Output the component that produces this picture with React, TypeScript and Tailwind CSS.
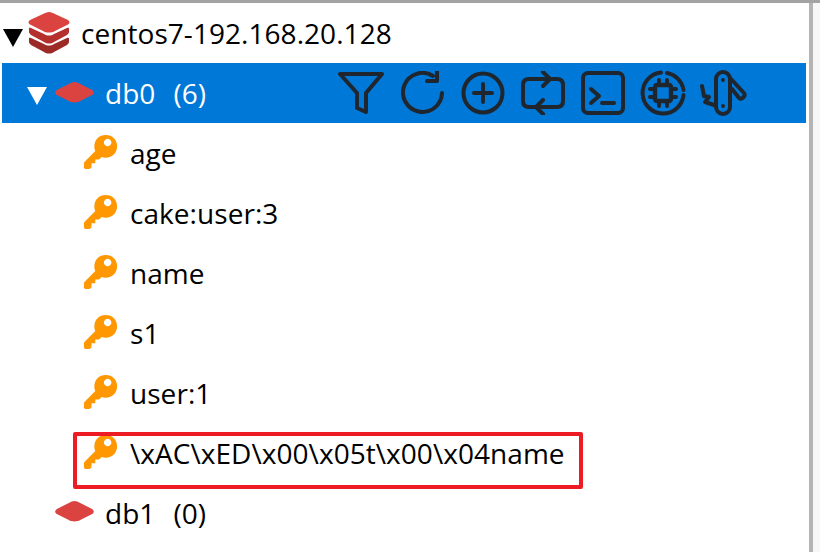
import React from "react"

const font = { fontFamily: '"Open Sans", "Noto Sans", sans-serif' }

const Stack = () => (
  <svg width="42" height="42" viewBox="0 0 42 42" className="shrink-0">
    <path d="M21 0 C23 0 25 1 27 2 L40 8 C42 9.5 42 11 40 12.5 L27 19 C24 21 18 21 15 19 L2 12.5 C0 11 0 9.5 2 8 L15 2 C17 1 19 0 21 0 Z" fill="#db4340" />
    <path d="M1 16 C1 15.5 2 15.5 3 16 L16 22 C19 24 23 24 26 22 L39 16 C40 15.5 41 15.5 41 16.5 L41 20 C41 21 40 22 39 23 L26 30 C23 32 19 32 16 30 L3 23 C2 22 1 21 1 20 Z" fill="#b5302d" />
    <path d="M1 26 C1 25.5 2 25.5 3 26 L16 32 C19 34 23 34 26 32 L39 26 C40 25.5 41 25.5 41 26.5 L41 30 C41 31 40 32 39 33 L26 40 C23 42 19 42 16 40 L3 33 C2 32 1 31 1 30 Z" fill="#9c2a27" />
  </svg>
)

const Disk = () => (
  <svg width="41" height="21" viewBox="0 0 42 22" className="shrink-0">
    <path d="M21 0 C23 0 25 1 27 2 L39 8 C42 10 42 12 39 14 L27 20 C24 22 18 22 15 20 L3 14 C0 12 0 10 3 8 L15 2 C17 1 19 0 21 0 Z" fill="#db4340" />
  </svg>
)

const Key = () => (
  <svg width="36" height="36" viewBox="0 0 36 38" className="shrink-0">
    <path
      fillRule="evenodd"
      d="M23 1 C30 1 35 6 35 13 C35 20 30 25 23 25 C21 25 20 25 19 24 L16 27 L12 27 L12 31 L8 31 L8 35 L6 37 L2 37 C1 37 0 36 0 35 L0 31 C0 30 1 29 1 29 L12 18 C11 16 11 15 11 13 C11 6 16 1 23 1 Z M25 5 C23 5 21 7 21 9 C21 11 23 13 25 13 C27 13 29 11 29 9 C29 7 27 5 25 5 Z"
      fill="#ff9800"
    />
  </svg>
)

const Toolbar = () => (
  <div className="flex items-center gap-[16px] ml-auto mr-[59px]">
    {/* filter */}
    <svg className="mr-[1px]" width="46" height="46" viewBox="0 0 46 46" fill="none" stroke="#20262e" strokeWidth="4" strokeLinecap="round" strokeLinejoin="round">
      <path d="M2 4 H44 L28 23 V42 L19 38 V23 Z" />
    </svg>
    {/* reload */}
    <svg width="44" height="44" viewBox="0 0 44 44" fill="none" stroke="#20262e" strokeWidth="4" strokeLinecap="round" strokeLinejoin="round">
      <path d="M41 22 A 19.5 19.5 0 1 1 32 5" />
      <path d="M36 0 V10 H26" />
    </svg>
    {/* plus */}
    <svg width="44" height="44" viewBox="0 0 44 44" fill="none" stroke="#20262e" strokeWidth="4" strokeLinecap="round" strokeLinejoin="round">
      <circle cx="22" cy="22" r="19.5" />
      <path d="M22 13 V31 M13 22 H31" />
    </svg>
    {/* swap */}
    <svg width="44" height="44" viewBox="0 0 44 44" fill="none" stroke="#20262e" strokeWidth="4" strokeLinecap="round" strokeLinejoin="round">
      <path d="M14 36 H8 C4 36 2 34 2 30 V14 C2 10 4 8 8 8 H28" />
      <path d="M22 1 L29 8 L22 15" />
      <path d="M30 8 H36 C40 8 42 10 42 14 V30 C42 34 40 36 36 36 H16" />
      <path d="M22 29 L15 36 L22 43" />
    </svg>
    {/* terminal */}
    <svg width="44" height="44" viewBox="0 0 44 44" fill="none" stroke="#20262e" strokeWidth="4" strokeLinecap="round" strokeLinejoin="round">
      <rect x="2" y="2" width="40" height="40" rx="5" />
      <path d="M10 18 L18 25 L10 32" />
      <path d="M21 32 H33" />
    </svg>
    {/* memory */}
    <svg className="-ml-[1px]" width="46" height="46" viewBox="0 0 46 46" fill="none" stroke="#20262e" strokeWidth="4" strokeLinecap="round" strokeLinejoin="round">
      <path d="M27 3 A 20.5 20.5 0 0 1 43.5 20" />
      <path d="M43.5 25 A 20.5 20.5 0 1 1 21 2.6" />
      <rect x="15" y="15" width="16" height="16" rx="2" strokeWidth="4.4" />
      <path d="M19 10 V14 M27 10 V14 M19 32 V36 M27 32 V36 M10 19 H14 M10 27 H14 M32 19 H36 M32 27 H36" />
    </svg>
    {/* swiss knife */}
    <svg className="-ml-[3px]" width="48" height="48" viewBox="0 0 48 48" fill="none" stroke="#20262e" strokeWidth="4" strokeLinecap="round" strokeLinejoin="round">
      <rect x="17" y="3" width="14" height="42" rx="7" />
      <circle cx="24" cy="11" r="2" fill="#20262e" stroke="none" />
      <circle cx="24" cy="37" r="2" fill="#20262e" stroke="none" />
      <path d="M32 10 L45 24 C47 27 43 31 40 29 L33 20" />
      <path d="M3 17 L5 27 L10 28 L6 33 L15 36" />
    </svg>
  </div>
)

const keys = ["age", "cake:user:3", "name", "s1", "user:1"]

export default function App() {
  return (
    <div className="w-[820px] h-[552px] bg-white overflow-hidden flex flex-col relative" style={font}>
      <div className="h-[3px] bg-[#a3a3a3] shrink-0" />
      <div className="flex w-[820px]">
        <div className="w-[806px] pl-[2px] text-[28px] tracking-[0.05px] text-black leading-none">
          {/* connection */}
          <div className="h-[60px] flex items-center">
            <span className="w-0 h-0 ml-[1px] mt-[9px] border-l-[10px] border-r-[10px] border-t-[18px] border-l-transparent border-r-transparent border-t-black" />
            <div className="ml-[5px] -mt-[1px]"><Stack /></div>
            <span className="ml-[11px] whitespace-nowrap">centos7-192.168.20.128</span>
          </div>
          {/* selected db */}
          <div className="h-[60px] bg-[#0078d7] flex items-center text-white">
            <span className="w-0 h-0 ml-[25px] mt-[6px] border-l-[10px] border-r-[10px] border-t-[18px] border-l-transparent border-r-transparent border-t-white" />
            <div className="ml-[7px] -mt-[2px]"><Disk /></div>
            <span className="ml-[10px] whitespace-nowrap">db0</span>
            <span className="ml-[18px] whitespace-nowrap">(6)</span>
            <Toolbar />
          </div>
          {/* keys */}
          {keys.map((k) => (
            <div key={k} className="h-[60px] flex items-center pl-[81px]">
              <div className="-mt-[3px]"><Key /></div>
              <span className="ml-[11px] whitespace-nowrap">{k}</span>
            </div>
          ))}
          <div className="h-[60px] flex items-center pl-[81px] relative">
            <div className="-mt-[3px]"><Key /></div>
            <span className="ml-[11px] whitespace-nowrap">{"\\xAC\\xED\\x00\\x05t\\x00\\x04name"}</span>
            <div className="absolute left-[71px] top-[9px] w-[510px] h-[57px] border-[4px] border-[#ed1c24] rounded-[2px]" />
          </div>
          {/* next db */}
          <div className="h-[60px] flex items-center pl-[52px]">
            <div className="-mt-[3px]"><Disk /></div>
            <span className="ml-[10px] whitespace-nowrap">db1</span>
            <span className="ml-[18px] whitespace-nowrap">(0)</span>
          </div>
        </div>
        <div className="w-[4px] h-[552px] ml-[3px] bg-[#b4b4b4]" />
        <div className="flex-1 h-[552px] bg-[#f7f7f7]" />
      </div>
    </div>
  )
}
